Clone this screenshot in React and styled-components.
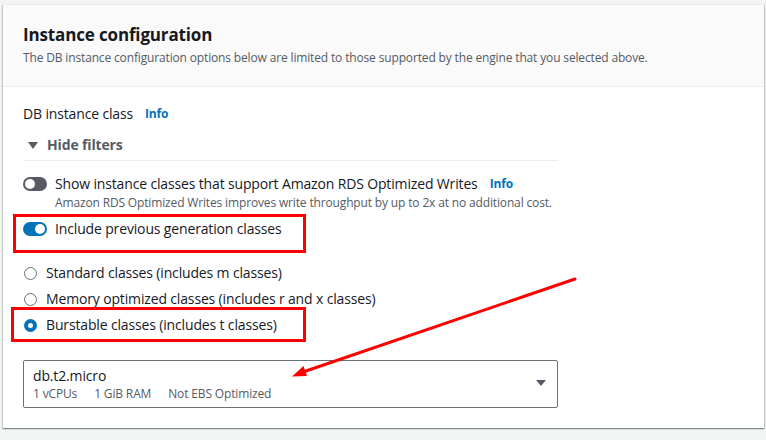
import React from "react";
import styled, { createGlobalStyle } from "styled-components";

const Global = createGlobalStyle`
  html, body { margin: 0; padding: 0; background: #f2f3f3; }
  body { font-family: "Open Sans", "Noto Sans", sans-serif; color: #16191f; letter-spacing: -0.15px; }
  #root { position: relative; width: 766px; height: 440px; overflow: hidden; }
`;

const Page = styled.div`
  padding: 4px 2px 0 3px;
`;

const Card = styled.section`
  width: 761px;
  background: #fff;
  border-top: 1px solid #eaeded;
  box-shadow: 0 1px 1px 0 rgba(0, 28, 36, 0.3), 1px 1px 1px 0 rgba(0, 28, 36, 0.15),
    -1px 1px 1px 0 rgba(0, 28, 36, 0.15);
`;

const Header = styled.header`
  background: #fafafa;
  padding: 19px 20px 20px;
  border-bottom: 1px solid #eaeded;
  display: flex;
  flex-direction: column;
  gap: 4px;
`;

const Title = styled.h2`
  margin: 0;
  font-size: 17px;
  line-height: 22px;
  font-weight: 700;
  color: #16191f;
`;

const Subtitle = styled.p`
  margin: 0;
  font-size: 12px;
  line-height: 16px;
  color: #545b64;
`;

const Body = styled.div`
  padding: 17px 20px 20px;
  display: flex;
  flex-direction: column;
`;

const Label = styled.div`
  font-size: 14px;
  line-height: 20px;
  color: #16191f;
  display: flex;
  align-items: center;
  gap: 12px;
`;

const Info = styled.span`
  font-size: 12px;
  font-weight: 700;
  color: #0073bb;
`;

const FilterToggle = styled.div`
  margin-top: 11px;
  width: 535px;
  padding-bottom: 5px;
  border-bottom: 1px solid #eaeded;
  display: flex;
  align-items: center;
  gap: 9px;
  font-size: 14px;
  line-height: 20px;
  font-weight: 700;
  color: #545b64;
  padding-left: 5px;
  box-sizing: border-box;
`;

const Caret = styled.span`
  width: 0;
  height: 0;
  border-left: 5px solid transparent;
  border-right: 5px solid transparent;
  border-top: 7px solid #545b64;
`;

const ToggleRow = styled.div`
  margin-top: ${(p) => p.$mt}px;
  display: flex;
  align-items: flex-start;
  gap: 8px;
`;

const Switch = styled.span`
  flex: none;
  position: relative;
  width: 24px;
  height: 14px;
  margin-top: 3px;
  border-radius: 7px;
  background: ${(p) => (p.$on ? "#0073bb" : "#545b64")};
  &::after {
    content: "";
    position: absolute;
    top: 2px;
    left: ${(p) => (p.$on ? "12px" : "2px")};
    width: 10px;
    height: 10px;
    border-radius: 50%;
    background: #fff;
  }
`;

const ToggleText = styled.div`
  display: flex;
  flex-direction: column;
`;

const ToggleLabel = styled.div`
  font-size: 14px;
  line-height: 20px;
  color: #16191f;
  display: flex;
  align-items: center;
  gap: 12px;
`;

const Description = styled.div`
  font-size: 12px;
  line-height: 16px;
  color: #545b64;
  margin-top: 1px;
`;

const RadioGroup = styled.div`
  margin-top: 24px;
  display: flex;
  flex-direction: column;
  gap: 6px;
`;

const RadioRow = styled.label`
  display: flex;
  align-items: center;
  gap: 9px;
  font-size: 14px;
  line-height: 20px;
  color: #16191f;
  padding-left: 1px;
`;

const RadioDot = styled.span`
  flex: none;
  width: 13px;
  height: 13px;
  box-sizing: border-box;
  border-radius: 50%;
  background: #fff;
  border: ${(p) => (p.$checked ? "4px solid #0073bb" : "1.5px solid #687078")};
`;

const Select = styled.div`
  margin-top: 25px;
  width: 535px;
  box-sizing: border-box;
  border: 1px solid #687078;
  border-radius: 2px;
  padding: 5px 11px 5px 9px;
  display: flex;
  align-items: center;
  justify-content: space-between;
`;

const SelectValue = styled.div`
  display: flex;
  flex-direction: column;
`;

const SelectMain = styled.div`
  font-size: 14px;
  line-height: 20px;
  color: #16191f;
`;

const SelectMeta = styled.div`
  display: flex;
  gap: 17px;
  font-size: 12px;
  line-height: 16px;
  color: #545b64;
`;

const SelectCaret = styled.span`
  width: 0;
  height: 0;
  border-left: 5px solid transparent;
  border-right: 5px solid transparent;
  border-top: 6px solid #545b64;
  margin-top: -2px;
`;

const Highlight = styled.div`
  position: absolute;
  left: ${(p) => p.$x}px;
  top: ${(p) => p.$y}px;
  width: ${(p) => p.$w}px;
  height: ${(p) => p.$h}px;
  box-sizing: border-box;
  border: 3px solid #ff0000;
  pointer-events: none;
`;

const ArrowLayer = styled.svg`
  position: absolute;
  left: 0;
  top: 0;
  pointer-events: none;
`;

export default function App() {
  return (
    <>
      <Global />
      <Page>
        <Card>
          <Header>
            <Title>Instance configuration</Title>
            <Subtitle>
              The DB instance configuration options below are limited to those supported by the engine that you selected above.
            </Subtitle>
          </Header>
          <Body>
            <Label>
              DB instance class <Info>Info</Info>
            </Label>
            <FilterToggle>
              <Caret />
              Hide filters
            </FilterToggle>
            <ToggleRow $mt={13}>
              <Switch />
              <ToggleText>
                <ToggleLabel>
                  Show instance classes that support Amazon RDS Optimized Writes <Info>Info</Info>
                </ToggleLabel>
                <Description>
                  Amazon RDS Optimized Writes improves write throughput by up to 2x at no additional cost.
                </Description>
              </ToggleText>
            </ToggleRow>
            <ToggleRow $mt={8}>
              <Switch $on />
              <ToggleText>
                <ToggleLabel>Include previous generation classes</ToggleLabel>
              </ToggleText>
            </ToggleRow>
            <RadioGroup>
              <RadioRow>
                <RadioDot />
                Standard classes (includes m classes)
              </RadioRow>
              <RadioRow>
                <RadioDot />
                Memory optimized classes (includes r and x classes)
              </RadioRow>
              <RadioRow>
                <RadioDot $checked />
                Burstable classes (includes t classes)
              </RadioRow>
            </RadioGroup>
            <Select>
              <SelectValue>
                <SelectMain>db.t2.micro</SelectMain>
                <SelectMeta>
                  <span>1 vCPUs</span>
                  <span>1 GiB RAM</span>
                  <span>Not EBS Optimized</span>
                </SelectMeta>
              </SelectValue>
              <SelectCaret />
            </Select>
          </Body>
        </Card>
      </Page>
      <Highlight $x={13} $y={214} $w={293} $h={39} />
      <Highlight $x={11} $y={307} $w={295} $h={35} />
      <ArrowLayer width="766" height="440" viewBox="0 0 766 440">
        <line x1="575" y1="279" x2="303" y2="372" stroke="#ff0000" strokeWidth="3" strokeLinecap="round" />
        <polygon points="292,376.5 303.5,366 307,376" fill="#ff0000" />
      </ArrowLayer>
    </>
  );
}
